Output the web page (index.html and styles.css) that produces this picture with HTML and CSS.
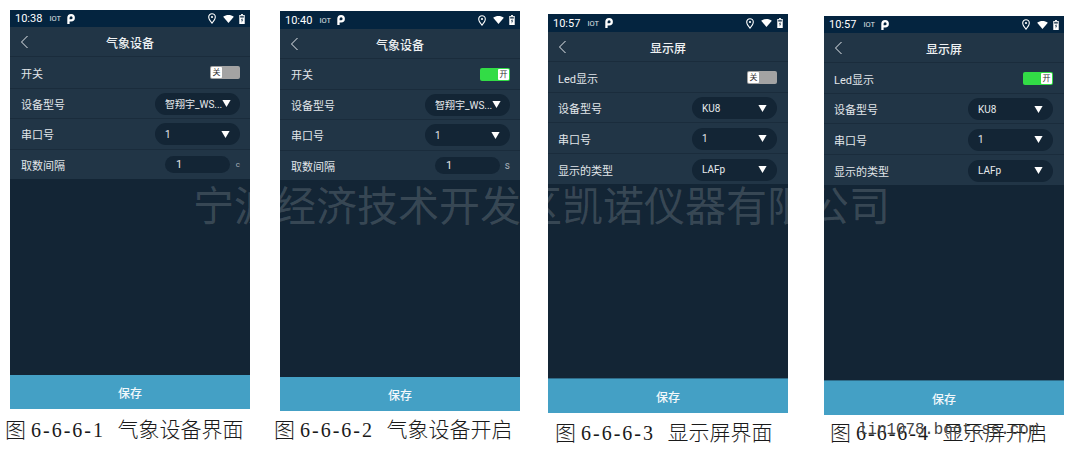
FILE: index.html
```html
<!DOCTYPE html>
<html lang="zh">
<head>
<meta charset="utf-8">
<title>设备界面</title>
<link rel="stylesheet" href="styles.css">
</head>
<body>
<svg class="defs" width="0" height="0" aria-hidden="true">
  <symbol id="pin" viewBox="0 0 8 11"><path d="M4 .7a3.3 3.3 0 0 0-3.3 3.3C.7 6.300 4 10.200 4 10.200S7.300 6.300 7.300 4A3.300 3.300 0 0 0 4 .7Z" fill="none" stroke="#fff" stroke-width="1.1"/><circle cx="4" cy="4" r="1.1" fill="#fff"/></symbol>
  <symbol id="wifi" viewBox="0 0 12 9"><path d="M0 2C3.500-.6 8.500-.6 12 2L6 9Z" fill="#fff"/></symbol>
  <symbol id="batt" viewBox="0 0 6 11"><path d="M2 0h2v1h2v10H0V1h2Z" fill="#fff"/><path d="M1 2h4v2H1Z" fill="#3b5266"/><path d="M3.400 4 1.800 7h1.100L2.500 9.500l1.800-3.400H3.100Z" fill="#16324a"/></symbol>
  <symbol id="plogo" viewBox="0 0 8 10"><path d="M.3 10V3.800a3.800 3.800 0 1 1 3.800 3.800H2.600V10ZM2.600 3.800v1.500h1.500a1.500 1.500 0 1 0-1.500-1.500Z" fill="#fff" fill-rule="evenodd"/></symbol>
  <symbol id="back" viewBox="0 0 9 14"><path d="M7.500 1 1.500 7l6 6" fill="none" stroke="#e6eaee" stroke-width="1"/></symbol>
  <symbol id="tri" viewBox="0 0 10 8"><path d="M.3 0h9.400L5 8Z" fill="#fff"/></symbol>
</svg>

<section class="phone p1">
  <div class="status"><span class="time">10:38</span><span class="iot">IOT</span><svg class="plogo"><use href="#plogo"/></svg><span class="status-right"><svg class="i-pin"><use href="#pin"/></svg><svg class="i-wifi"><use href="#wifi"/></svg><svg class="i-batt"><use href="#batt"/></svg></span></div>
  <div class="head"><svg class="back"><use href="#back"/></svg><span class="title">气象设备</span></div>
  <div class="row r1"><span>开关</span><span class="toggle off"><span class="knob">关</span></span></div>
  <div class="row r2"><span>设备型号</span><span class="select"><span class="val">智翔宇_WS...</span><svg class="tri"><use href="#tri"/></svg></span></div>
  <div class="row r3"><span>串口号</span><span class="select"><span class="val">1</span><svg class="tri"><use href="#tri"/></svg></span></div>
  <div class="row r4"><span>取数间隔</span><span class="input-wrap"><span class="input">1</span><span class="unit dim">c</span></span></div>
  <div class="fill"></div>
  <div class="save">保存</div>
</section>

<section class="phone p2">
  <div class="status"><span class="time">10:40</span><span class="iot">IOT</span><svg class="plogo"><use href="#plogo"/></svg><span class="status-right"><svg class="i-pin"><use href="#pin"/></svg><svg class="i-wifi"><use href="#wifi"/></svg><svg class="i-batt"><use href="#batt"/></svg></span></div>
  <div class="head"><svg class="back"><use href="#back"/></svg><span class="title">气象设备</span></div>
  <div class="row r1"><span>开关</span><span class="toggle on"><span class="knob">开</span></span></div>
  <div class="row r2"><span>设备型号</span><span class="select"><span class="val">智翔宇_WS...</span><svg class="tri"><use href="#tri"/></svg></span></div>
  <div class="row r3"><span>串口号</span><span class="select"><span class="val">1</span><svg class="tri"><use href="#tri"/></svg></span></div>
  <div class="row r4"><span>取数间隔</span><span class="input-wrap"><span class="input">1</span><span class="unit">s</span></span></div>
  <div class="fill"></div>
  <div class="save">保存</div>
</section>

<section class="phone p3">
  <div class="status"><span class="time">10:57</span><span class="iot">IOT</span><svg class="plogo"><use href="#plogo"/></svg><span class="status-right"><svg class="i-pin"><use href="#pin"/></svg><svg class="i-wifi"><use href="#wifi"/></svg><svg class="i-batt"><use href="#batt"/></svg></span></div>
  <div class="head"><svg class="back"><use href="#back"/></svg><span class="title">显示屏</span></div>
  <div class="row r1"><span>Led显示</span><span class="toggle off"><span class="knob">关</span></span></div>
  <div class="row r2"><span>设备型号</span><span class="select"><span class="val">KU8</span><svg class="tri"><use href="#tri"/></svg></span></div>
  <div class="row r3"><span>串口号</span><span class="select"><span class="val">1</span><svg class="tri"><use href="#tri"/></svg></span></div>
  <div class="row r4"><span>显示的类型</span><span class="select"><span class="val">LAFp</span><svg class="tri"><use href="#tri"/></svg></span></div>
  <div class="fill"></div>
  <div class="save edge">保存</div>
</section>

<section class="phone p4">
  <div class="status"><span class="time">10:57</span><span class="iot">IOT</span><svg class="plogo"><use href="#plogo"/></svg><span class="status-right"><svg class="i-pin"><use href="#pin"/></svg><svg class="i-wifi"><use href="#wifi"/></svg><svg class="i-batt"><use href="#batt"/></svg></span></div>
  <div class="head"><svg class="back"><use href="#back"/></svg><span class="title">显示屏</span></div>
  <div class="row r1"><span>Led显示</span><span class="toggle on"><span class="knob">开</span></span></div>
  <div class="row r2"><span>设备型号</span><span class="select"><span class="val">KU8</span><svg class="tri"><use href="#tri"/></svg></span></div>
  <div class="row r3"><span>串口号</span><span class="select"><span class="val">1</span><svg class="tri"><use href="#tri"/></svg></span></div>
  <div class="row r4"><span>显示的类型</span><span class="select"><span class="val">LAFp</span><svg class="tri"><use href="#tri"/></svg></span></div>
  <div class="fill"></div>
  <div class="save edge">保存</div>
</section>

<p class="cap c1">图<span class="m"> 6-6-6-1 </span>气象设备界面</p>
<p class="cap c2">图<span class="m"> 6-6-6-2 </span>气象设备开启</p>
<p class="cap c3">图<span class="m"> 6-6-6-3 </span>显示屏界面</p>
<p class="cap c4">图<span class="m"> 6-6-6-4 </span>显示屏开启</p>
<div class="credit">lin1078.bootcss.com</div>
<div class="mark">宁波经济技术开发区凯诺仪器有限公司</div>
</body>
</html>
```
FILE: styles.css
```css
html, body { margin: 0; padding: 0; background: #fff; }
body { position: relative; width: 1075px; height: 449px; overflow: hidden; font-family: "Roboto", "Noto Sans CJK SC", sans-serif; }
.defs { position: absolute; }

.phone { position: absolute; width: 240px; height: 399px; display: flex; flex-direction: column; background: #132535; color: #e4e8ec; font-size: 11px; }
.p1 { left: 10px; top: 10px; }
.p2 { left: 280px; top: 11px; height: 400px; }
.p3 { left: 548px; top: 14px; }
.p4 { left: 824px; top: 16px; }

.status { height: 17px; flex: none; background: #04243f; display: flex; align-items: center; padding: 0 5px; color: #fff; }
.p2 .status, .p3 .status { height: 18px; }
.time { font-size: 11px; }
.iot { font-size: 7.5px; margin-left: 7px; color: #e0e4e8; }
.plogo { width: 8px; height: 10px; margin-left: 6px; }
.status-right { margin-left: auto; display: flex; align-items: center; }
.i-pin { width: 8px; height: 11px; }
.i-wifi { width: 11px; height: 8px; margin-left: 7px; }
.i-batt { width: 6px; height: 10px; margin-left: 5px; }

.head { height: 30px; flex: none; display: flex; align-items: center; position: relative; background: #213546; border-bottom: 1px solid #1a2c3c; box-sizing: border-box; }
.back { width: 9px; height: 14px; margin-left: 10px; }
.title { position: absolute; left: 0; right: 0; margin-top: 1px; text-align: center; font-size: 12px; font-weight: 500; color: #eef1f3; }

.row { flex: none; display: flex; align-items: center; justify-content: space-between; padding: 0 10px 0 11px; background: #213546; border-bottom: 1px solid #1a2c3c; box-sizing: border-box; color: #e2e6ea; }
.r1 { height: 32px; }
.r2 { height: 30px; }
.r3 { height: 31px; }
.r4 { height: 29px; border-bottom: 0; }
.p2 .r1 { height: 31px; }
.p3 .r1, .p4 .r1 { height: 31px; }
.p3 .r4, .p4 .r4 { height: 30px; }
.p3 .row, .p4 .row { padding: 1px 11px 0 10px; }

.toggle { width: 30px; height: 13px; border-radius: 2px; display: flex; align-items: center; box-sizing: border-box; padding: 1px; }
.toggle.off { background: #a3a3a3; justify-content: flex-start; }
.toggle.on { background: #32dc46; justify-content: flex-end; }
.knob { width: 11px; height: 11px; background: #fff; color: #333; font-size: 8px; line-height: 11px; text-align: center; border-radius: 1px; }

.select { width: 85px; height: 22px; border-radius: 11px; background: #132535; display: flex; align-items: center; justify-content: space-between; padding: 0 10px; box-sizing: border-box; font-size: 10px; color: #e6e9ec; white-space: nowrap; }
.tri { width: 9px; height: 7px; flex: none; }

.input-wrap { display: flex; align-items: center; }
.input { width: 65px; height: 17px; border-radius: 9px; background: #132535; font-size: 11px; line-height: 17px; padding-left: 11px; box-sizing: border-box; }
.unit { width: 10px; text-align: right; font-size: 10px; color: #a6b0b8; }
.unit.dim { font-size: 8px; }

.fill { flex: 1; background: #132535; }
.save { height: 34px; flex: none; background: #44a0c5; color: #f2f8fb; font-size: 12px; font-weight: 500; display: flex; align-items: center; justify-content: center; box-sizing: border-box; }
.save.edge { border-top: 1px solid #2f6d8a; height: 35px; }

.cap { position: absolute; margin: 0; font-family: "Noto Sans CJK SC", sans-serif; font-weight: 300; font-size: 21px; line-height: 24px; color: #1a1a1a; white-space: pre; }
.cap .m { font-family: "Liberation Serif", serif; font-size: 20px; letter-spacing: 2px; margin: 0 5.5px 0 -2px; }
.c1 { left: 5px; top: 416px; }
.c2 { left: 274px; top: 416px; }
.c3 { left: 555px; top: 419px; }
.c4 { left: 830px; top: 419px; }

.credit { position: absolute; left: 858px; top: 421px; font-family: "Liberation Mono", monospace; font-size: 15.8px; line-height: 18px; color: #444; white-space: nowrap; }
.mark { position: absolute; left: 193px; top: 175px; font-family: "Noto Sans CJK SC", sans-serif; font-size: 41px; line-height: 56px; color: rgba(255, 255, 255, 0.16); white-space: nowrap; }
```
